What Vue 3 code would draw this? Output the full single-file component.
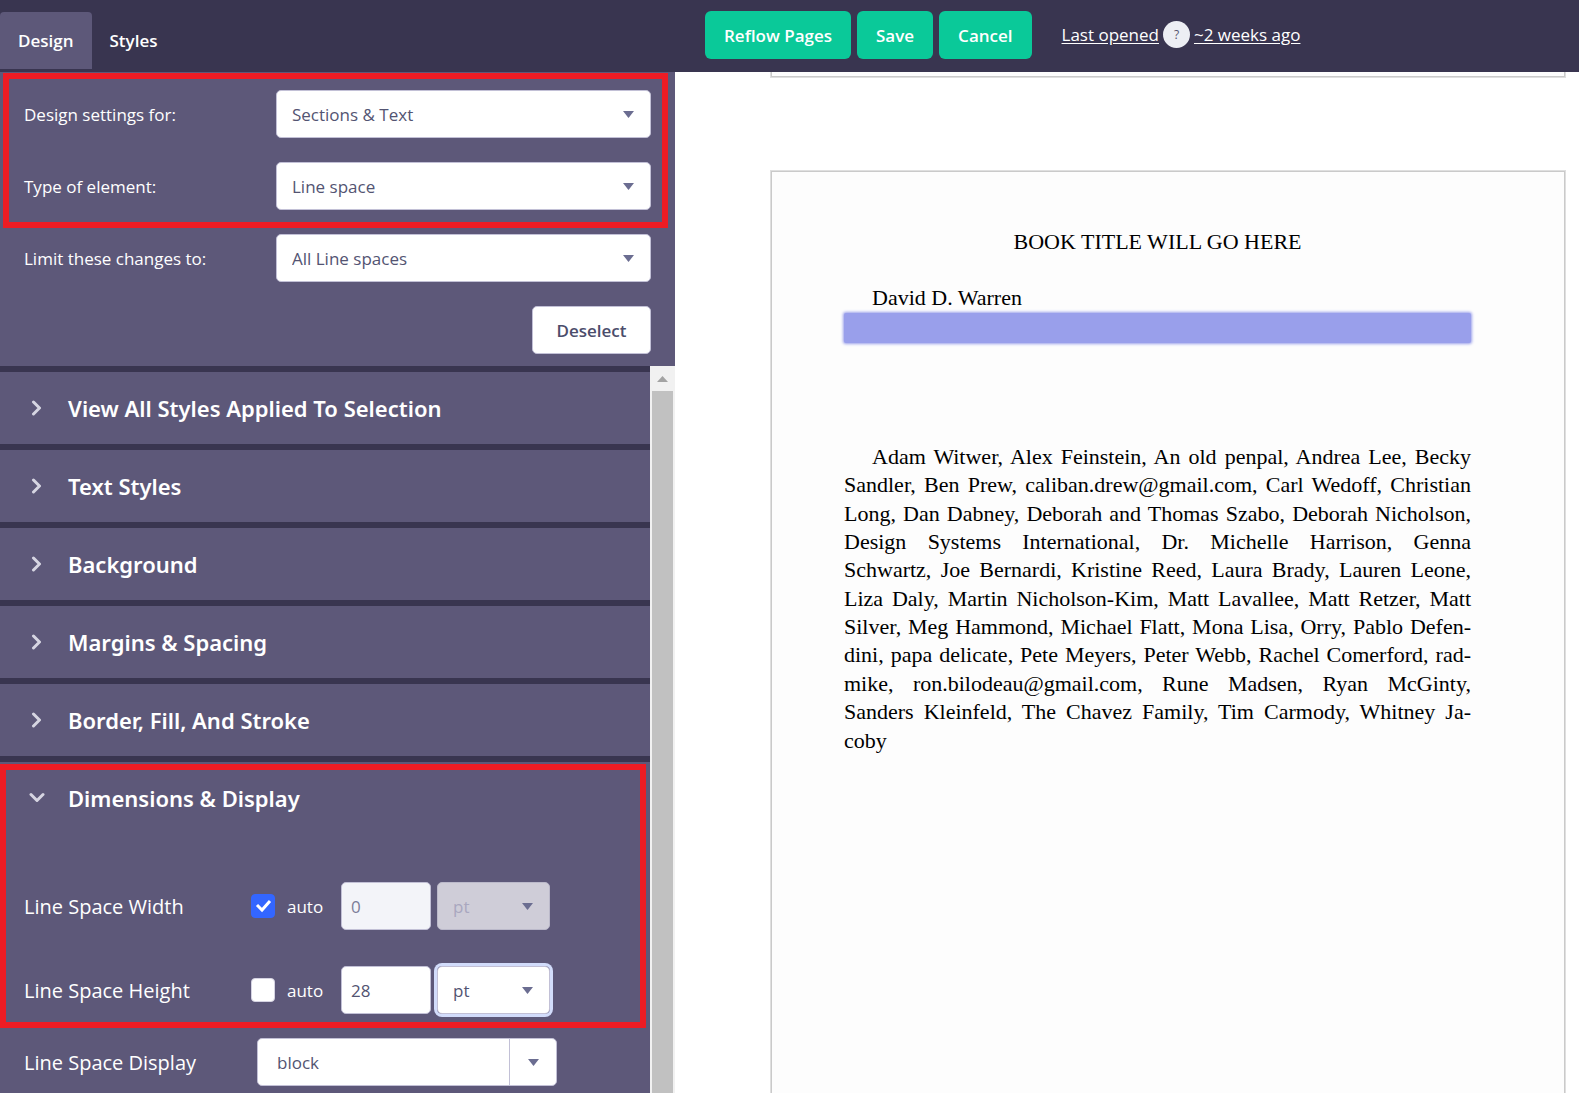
<script setup>
import { ref } from 'vue'

const targets = [
  { id: 'settings-for', label: 'Design settings for:', value: 'Sections & Text' },
  { id: 'element-type', label: 'Type of element:', value: 'Line space' },
]

const sections = [
  'View All Styles Applied To Selection',
  'Text Styles',
  'Background',
  'Margins & Spacing',
  'Border, Fill, And Stroke',
]

const dimensions = ref([
  { id: 'width', label: 'Line Space Width', auto: true, value: '0' },
  { id: 'height', label: 'Line Space Height', auto: false, value: '28' },
])

const display = ref('block')

const bodyLines = [
  'Adam Witwer, Alex Feinstein, An old penpal, Andrea Lee, Becky',
  'Sandler, Ben Prew, caliban.drew@gmail.com, Carl Wedoff, Christian',
  'Long, Dan Dabney, Deborah and Thomas Szabo, Deborah Nicholson,',
  'Design Systems International, Dr. Michelle Harrison, Genna',
  'Schwartz, Joe Bernardi, Kristine Reed, Laura Brady, Lauren Leone,',
  'Liza Daly, Martin Nicholson-Kim, Matt Lavallee, Matt Retzer, Matt',
  'Silver, Meg Hammond, Michael Flatt, Mona Lisa, Orry, Pablo Defen-',
  'dini, papa delicate, Pete Meyers, Peter Webb, Rachel Comerford, rad-',
  'mike, ron.bilodeau@gmail.com, Rune Madsen, Ryan McGinty,',
  'Sanders Kleinfeld, The Chavez Family, Tim Carmody, Whitney Ja-',
  'coby',
]
</script>

<template>
  <div class="app">
    <header class="topbar">
      <nav class="tabs">
        <button type="button" class="tab active">Design</button>
        <button type="button" class="tab">Styles</button>
      </nav>
      <div class="actions">
        <button type="button" class="action">Reflow Pages</button>
        <button type="button" class="action">Save</button>
        <button type="button" class="action">Cancel</button>
        <p class="opened">
          <a href="#">Last opened</a>
          <button type="button" class="help" aria-label="Help">?</button>
          <a href="#">~2 weeks ago</a>
        </p>
      </div>
    </header>

    <div class="workspace">
      <aside class="sidebar">
        <form class="target" @submit.prevent>
          <div class="target-group highlight">
            <div v-for="t in targets" :key="t.id" class="target-row">
              <label :for="t.id">{{ t.label }}</label>
              <span class="select">
                <select :id="t.id"><option>{{ t.value }}</option></select>
                <svg class="caret" viewBox="0 0 11 7"><path d="M0 0h11L5.500 7z" /></svg>
              </span>
            </div>
          </div>
          <div class="target-row">
            <label for="limit">Limit these changes to:</label>
            <span class="select">
              <select id="limit"><option>All Line spaces</option></select>
              <svg class="caret" viewBox="0 0 11 7"><path d="M0 0h11L5.500 7z" /></svg>
            </span>
          </div>
          <button type="button" class="deselect">Deselect</button>
        </form>

        <div class="scroller">
          <div class="panels">
            <section v-for="s in sections" :key="s" class="panel">
              <button type="button" class="panel-head">
                <svg class="chevron" viewBox="0 0 16 16"><path d="M4.500 2L10.500 8l-6 6" /></svg>
                {{ s }}
              </button>
            </section>
            <section class="panel">
              <div class="dimension-group highlight">
                <button type="button" class="panel-head">
                  <svg class="chevron" viewBox="0 0 16 16"><path d="M2 4.500L8 10.500l6-6" /></svg>
                  Dimensions &amp; Display
                </button>
                <div class="dimensions">
                  <div v-for="d in dimensions" :key="d.id" class="dimension-row">
                    <label class="name" :for="d.id">{{ d.label }}</label>
                    <label class="auto">
                      <span class="tick">
                        <input v-model="d.auto" type="checkbox" />
                        <svg v-if="d.auto" viewBox="0 0 24 24"><path d="M6 11l5 5 8-9" /></svg>
                      </span>
                      auto
                    </label>
                    <input :id="d.id" v-model="d.value" class="amount" type="text" :disabled="d.auto" />
                    <span class="select unit" :class="{ focused: !d.auto }">
                      <select :aria-label="d.label + ' unit'" :disabled="d.auto"><option>pt</option></select>
                      <svg class="caret" viewBox="0 0 11 7"><path d="M0 0h11L5.500 7z" /></svg>
                    </span>
                  </div>
                </div>
              </div>
              <div class="display-row">
                <label class="name" for="display">Line Space Display</label>
                <span class="combo">
                  <input id="display" v-model="display" type="text" />
                  <button type="button" aria-label="Show display options">
                    <svg viewBox="0 0 11 7"><path d="M0 0h11L5.500 7z" /></svg>
                  </button>
                </span>
              </div>
            </section>
          </div>
          <div class="scrollbar">
            <div class="scroll-up">
              <svg viewBox="0 0 11 6"><path d="M0 6h11L5.500 0z" /></svg>
            </div>
            <div class="thumb"></div>
          </div>
        </div>
      </aside>

      <main class="preview">
        <div class="sheet previous"></div>
        <article class="sheet">
          <h1>BOOK TITLE WILL GO HERE</h1>
          <p class="author">David D. Warren</p>
          <div class="line-space"></div>
          <p class="names">
            <span v-for="line in bodyLines" :key="line">{{ line }}</span>
          </p>
        </article>
      </main>
    </div>
  </div>
</template>

<style>
body {
  margin: 0;
  background: #fff;
}
</style>

<style scoped>
* {
  box-sizing: border-box;
}
.app {
  display: flex;
  flex-direction: column;
  height: 100vh;
  overflow: hidden;
  font-family: 'Open Sans', 'Noto Sans', sans-serif;
  font-size: 17px;
  color: #fff;
}
button,
input,
select {
  font: inherit;
  margin: 0;
}
button {
  border: 0;
  padding: 0;
  cursor: pointer;
}
.topbar {
  display: flex;
  flex: none;
  height: 72px;
  background: #393550;
}
.tabs {
  display: flex;
  flex: none;
  width: 705px;
  padding: 12px 0 3px;
}
.tab {
  padding: 0 18px;
  border-radius: 4px 4px 0 0;
  background: none;
  color: #fff;
  font-weight: 600;
}
.tab.active {
  background: #5d5879;
}
.actions {
  display: flex;
  align-items: center;
  gap: 6px;
  height: 70px;
}
.action {
  height: 48px;
  padding: 0 19px;
  border-radius: 6px;
  background: #0ac999;
  color: #fff;
  font-weight: 600;
}
.opened {
  display: flex;
  align-items: center;
  gap: 4px;
  margin: 0 0 2px 24px;
  white-space: nowrap;
}
.opened a {
  color: #fff;
  text-underline-offset: 2px;
}
.help {
  width: 27px;
  height: 27px;
  border-radius: 50%;
  background: #edeef4;
  color: #55536f;
  font-size: 12px;
}
.workspace {
  display: flex;
  flex: 1;
  min-height: 0;
}
.sidebar {
  display: flex;
  flex: none;
  flex-direction: column;
  width: 675px;
  background: #5d5879;
}
.target {
  display: flex;
  flex-direction: column;
  gap: 24px;
  padding: 18px 24px 12px;
}
.target-group {
  display: flex;
  flex-direction: column;
  gap: 24px;
}
.highlight {
  position: relative;
}
.highlight::after {
  content: '';
  position: absolute;
  border: 6px solid #ed1c24;
  pointer-events: none;
}
.target-group::after {
  inset: -17px -17px -18px -21px;
}
.target-row {
  display: flex;
  align-items: center;
}
.target-row label {
  width: 252px;
}
.target-row .select {
  flex: 1;
}
.select {
  position: relative;
  display: block;
  border-radius: 5px;
}
.select select {
  display: block;
  width: 100%;
  height: 48px;
  padding: 0 40px 0 15px;
  border: 1px solid #c2c0d6;
  border-radius: 5px;
  background: #fff;
  color: #535472;
  appearance: none;
  outline: 0;
}
.caret {
  position: absolute;
  top: 21px;
  right: 17px;
  width: 11px;
  height: 7px;
  fill: #6b6d91;
  pointer-events: none;
}
.deselect {
  align-self: flex-end;
  width: 119px;
  height: 48px;
  border: 1px solid #c2c0d6;
  border-radius: 5px;
  background: #fff;
  color: #4b4d6b;
  font-weight: 600;
}
.scroller {
  display: flex;
  flex: 1;
  min-height: 0;
}
.panels {
  flex: 1;
  overflow: hidden;
}
.panel {
  border-top: 6px solid #393550;
}
.panel-head {
  display: flex;
  align-items: center;
  gap: 23px;
  width: 100%;
  height: 72px;
  padding: 0 0 0 29px;
  background: none;
  color: #fff;
  font-family: 'Noto Sans', 'Open Sans', sans-serif;
  font-size: 22px;
  font-weight: 600;
  line-height: 30px;
}
.chevron {
  width: 16px;
  height: 16px;
  fill: none;
  stroke: #d6d5e2;
  stroke-width: 3;
  stroke-linecap: round;
  stroke-linejoin: round;
}
.dimension-group::after {
  inset: 2px 4px 0 0;
}
.dimensions {
  display: flex;
  flex-direction: column;
  gap: 36px;
  padding: 48px 24px 14px;
}
.dimension-row {
  display: flex;
  align-items: center;
}
.name {
  width: 227px;
  font-size: 20px;
}
.auto {
  display: flex;
  align-items: center;
  gap: 12px;
  width: 90px;
}
.tick {
  position: relative;
  display: block;
  width: 24px;
  height: 24px;
}
.tick input {
  display: block;
  width: 24px;
  height: 24px;
  border: 1px solid #d5d3e2;
  border-radius: 4px;
  background: #fff;
  appearance: none;
}
.tick input:checked {
  border-color: #3366ff;
  background: #3366ff;
}
.tick svg {
  position: absolute;
  inset: 0;
  fill: none;
  stroke: #fff;
  stroke-width: 3;
  pointer-events: none;
}
.amount {
  width: 90px;
  height: 48px;
  margin-right: 6px;
  padding: 0 9px;
  border: 1px solid #c2c0d6;
  border-radius: 5px;
  background: #fff;
  color: #535472;
}
.amount:disabled {
  background: #f3f4f9;
  color: #7c7d98;
}
.unit {
  width: 113px;
}
.unit select:disabled {
  border-color: #bbb9ca;
  background: #cfcdd8;
  color: #a9a7bf;
  opacity: 1;
}
.unit.focused {
  box-shadow: 0 0 0 3px #d2dcfb;
}
.display-row {
  display: flex;
  align-items: center;
  padding: 10px 24px 12px;
}
.display-row .name {
  width: 233px;
}
.combo {
  display: flex;
  width: 300px;
  height: 48px;
  border: 1px solid #c2c0d6;
  border-radius: 5px;
  background: #fff;
}
.combo input {
  flex: 1;
  min-width: 0;
  padding: 0 19px;
  border: 0;
  border-radius: 5px;
  background: none;
  color: #535472;
}
.combo button {
  display: flex;
  align-items: center;
  justify-content: center;
  width: 47px;
  border-left: 1px solid #c2c0d6;
  background: none;
}
.combo svg {
  width: 11px;
  height: 7px;
  fill: #6b6d91;
}
.scrollbar {
  display: flex;
  flex-direction: column;
  width: 25px;
  background: #f1f1f1;
}
.scroll-up {
  display: flex;
  align-items: center;
  justify-content: center;
  height: 25px;
}
.scroll-up svg {
  width: 11px;
  height: 6px;
  fill: #a3a3a3;
}
.thumb {
  flex: 1;
  margin: 0 2px;
  background: #c1c1c1;
}
.preview {
  display: flex;
  flex: 1;
  flex-direction: column;
  min-width: 0;
  padding: 0 13px 0 95px;
  background: #fff;
  color: #000;
  font-family: 'Liberation Serif', 'Times New Roman', serif;
  font-size: 22px;
  line-height: 1.29;
}
.sheet {
  flex: 1;
  padding: 57px 94px 0 73px;
  border: 1px solid #dfdfdf;
  border-bottom: 0;
  background: #fdfdfd;
  box-shadow: inset 1px 1px 0 #cacaca, inset -1px 0 0 #cacaca;
}
.sheet.previous {
  flex: none;
  height: 6px;
  margin-bottom: 92px;
  padding: 0;
  border: 1px solid #dfdfdf;
  border-top: 0;
  box-shadow: inset 1px -1px 0 #cacaca, inset -1px 0 0 #cacaca;
}
h1 {
  margin: 0 0 28px;
  font-size: 22px;
  font-weight: 400;
  text-align: center;
}
.author {
  margin: 0;
  text-indent: 28px;
}
.line-space {
  height: 30px;
  margin-bottom: 100px;
  border-radius: 2px;
  background: #999feb;
  box-shadow: 0 0 3px 1px #999feb;
}
.names {
  margin: 0;
}
.names span {
  display: block;
  text-align: justify;
  text-align-last: justify;
}
.names span:first-child {
  text-indent: 28px;
}
.names span:last-child {
  text-align-last: left;
}
</style>
